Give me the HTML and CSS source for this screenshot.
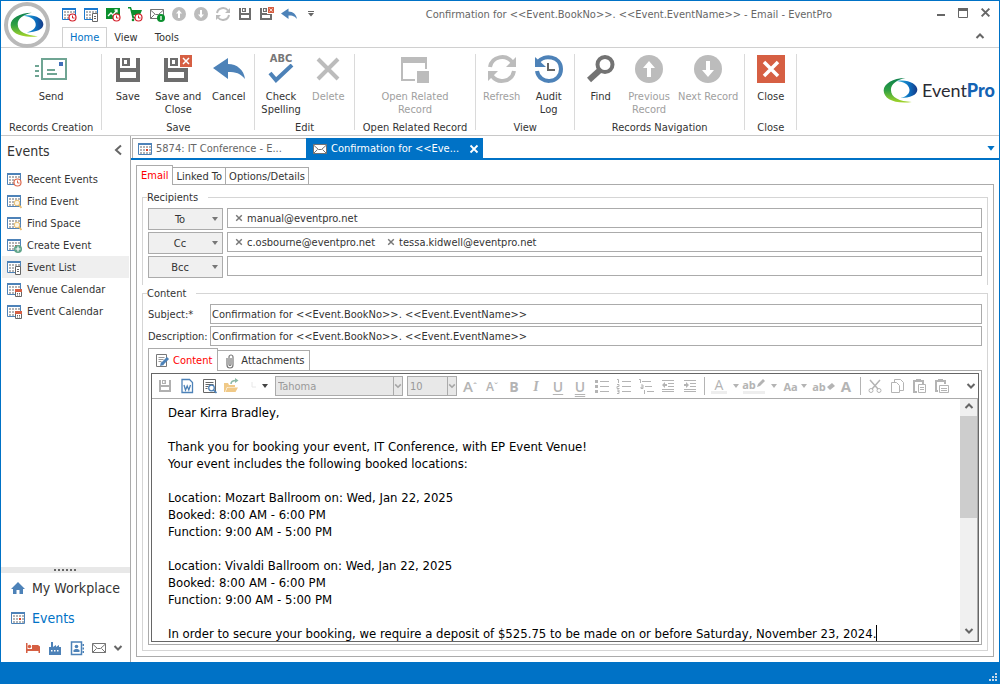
FILE: index.html
```
<!DOCTYPE html>
<html lang="en">
<head>
    <meta charset="utf-8">
    <title>Confirmation - Email - EventPro</title>
    <link rel="stylesheet" href="styles.css">
</head>
<body>
    <!-- shared icons -->
    <svg class="defs" width="0" height="0">
        <defs>
            <linearGradient id="green" x1="0" y1="0" x2="0" y2="1">
                <stop offset="0" stop-color="#0c7f4c"/><stop offset="0.5" stop-color="#2fa043"/><stop offset="1" stop-color="#a5d52a"/>
            </linearGradient>
            <linearGradient id="blue" x1="0" y1="0" x2="1" y2="0">
                <stop offset="0" stop-color="#2fb4d8"/><stop offset="0.6" stop-color="#0b6fc0"/><stop offset="1" stop-color="#173a86"/>
            </linearGradient>
        </defs>
        <symbol id="swoosh" viewBox="670 230 106 80">
            <path fill="url(#green)" d="M738 232C700 232 672 250 672 270C672 295 705 312 757 305C720 303 694 292 694 268C694 250 712 238 738 232Z"/>
            <path fill="url(#blue)" d="M712 241C745 235 774 250 774 268C774 284 752 293 722 293C742 288 752 278 750 266C748 252 735 244 712 241Z"/>
        </symbol>
        <symbol id="cal" viewBox="0 0 16 16">
            <path fill="#fff" stroke="currentColor" d="M1.500 2.500h13v11h-13z"/>
            <path fill="currentColor" d="M1 2h14v2H1z"/>
            <path stroke="#b4b4b4" stroke-width="2" stroke-dasharray="2 1" d="M3 6h11M3 9h11M3 12h11"/>
            <path fill="#e0442a" d="M9 8h2v2H9z"/>
        </symbol>
        <symbol id="clock" viewBox="0 0 16 16">
            <circle cx="11.500" cy="11.500" r="3.500" fill="#fff" stroke="currentColor" stroke-width="1.200"/>
            <path fill="none" stroke="currentColor" d="M11.500 9.500v2.500h2"/>
        </symbol>
        <symbol id="page" viewBox="0 0 16 16">
            <path fill="#fff" stroke="#666" d="M9.500 7.500h5v8h-5z"/><path stroke="#666" d="M11 10.500h2M11 12.500h2"/>
        </symbol>
        <symbol id="minical" viewBox="0 0 16 16">
            <path fill="#fff" stroke="#666" d="M9.500 9.500h6v6h-6z"/><path fill="#d65f43" d="M9 8h7v3H9z"/><path stroke="#666" stroke-dasharray="1 1" d="M11 12.500h3M11 14h3"/>
        </symbol>
        <symbol id="glass" viewBox="0 0 16 16">
            <circle cx="11" cy="10" r="2.800" fill="#fbf4e3" stroke="#e9bd6d"/><path stroke="#e9bd6d" stroke-width="1.800" d="M13 12l2.500 3"/>
        </symbol>
        <symbol id="plus" viewBox="0 0 16 16">
            <circle cx="12" cy="12" r="4" fill="#5fa48a"/><path stroke="#fff" stroke-width="1.200" d="M12 9.500v5M9.500 12h5"/>
        </symbol>
        <symbol id="mail" viewBox="0 0 16 16">
            <path fill="#fff" stroke="#737373" d="M1.500 3.500h13v9h-13z"/>
            <path fill="none" stroke="#737373" d="M1.500 4l5 4.500h3L14.500 4M1.500 12.500l4-4M14.500 12.500l-4-4"/>
        </symbol>
        <symbol id="disk" viewBox="0 0 24 24">
            <path fill="currentColor" fill-rule="evenodd" d="M0 0h4v10h16V0h4v24H0zM4 14v6h16v-6z"/>
            <path fill="currentColor" fill-rule="evenodd" d="M6 0h8v8H6zM8 2v4h3V2z"/>
        </symbol>
        <symbol id="redx" viewBox="0 0 28 28">
            <path fill="#d65f43" d="M0 0h28v28H0z"/><path stroke="#fff" stroke-width="3.500" d="M7 7l14 14M21 7L7 21"/>
        </symbol>
        <symbol id="undo" viewBox="0 0 32 22">
            <path fill="#4d82b8" d="M0 10L15 0v6c9 0 16 6 17 15c-5-6-9-7-17-7v7z"/>
        </symbol>
        <symbol id="up" viewBox="0 0 28 28">
            <circle cx="14" cy="14" r="14" fill="#bcbcbc"/><path fill="#fff" d="M14 6l6 7h-4v9h-4v-9H8z"/>
        </symbol>
        <symbol id="down" viewBox="0 0 28 28">
            <circle cx="14" cy="14" r="14" fill="#bcbcbc"/><path fill="#fff" d="M14 22l6-7h-4V6h-4v9H8z"/>
        </symbol>
        <symbol id="refresh" viewBox="0 0 28 28">
            <path fill="none" stroke="#bcbcbc" stroke-width="4" d="M2 12C4 1 18-1 24 7M26 16C24 27 10 29 4 21"/>
            <path fill="#bcbcbc" d="M28 2v10H18zM0 26V16h10z"/>
        </symbol>
        <symbol id="chev" viewBox="0 0 10 10"><path fill="none" stroke="currentColor" stroke-width="2" d="M1.500 3L5 6.500 8.500 3"/></symbol>
        <symbol id="tri" viewBox="0 0 8 5"><path fill="currentColor" d="M1 0h6L4 4z"/></symbol>
        <symbol id="x" viewBox="0 0 10 10"><path stroke="currentColor" stroke-width="1.800" d="M1.500 1.500l7 7M8.500 1.500l-7 7"/></symbol>
    </svg>

    <div class="window">
        <header class="top">
            <button class="app-btn" aria-label="Application menu"><svg width="34" height="28"><use href="#swoosh"/></svg></button>
            <div class="top-main">
                <div class="title-bar">
                    <div class="quick">
                        <button aria-label="Recent events"><svg class="bright"><use href="#cal"/><use href="#clock" class="red"/></svg></button>
                        <button aria-label="Event list"><svg class="bright"><use href="#cal"/><use href="#page"/></svg></button>
                        <button aria-label="Dashboard"><svg viewBox="0 0 16 16"><path fill="#0a8f2d" d="M1 2h14v11H1z"/><path fill="none" stroke="#fff" stroke-width="1.300" d="M3 10l3-3 2 2 4-5M9.500 4H12v2.500"/><use href="#clock" class="red"/></svg></button>
                        <button aria-label="Sales"><svg viewBox="0 0 16 16"><path fill="#0a8f2d" d="M1 1h3l1 3h10l-2 5H6.500l.5 2h5v1.500H5.500L3 2.500H1z"/><circle cx="6" cy="14" r="1.300" fill="#0a8f2d"/><use href="#clock" class="red"/></svg></button>
                        <button aria-label="Email"><svg viewBox="0 0 16 16"><use href="#mail"/><circle cx="12" cy="12" r="4" fill="#0a8f2d"/><path stroke="#fff" stroke-width="1.300" d="M12 10v4"/></svg></button>
                        <button aria-label="Previous"><svg class="s14"><use href="#up"/></svg></button>
                        <button aria-label="Next"><svg class="s14"><use href="#down"/></svg></button>
                        <button aria-label="Refresh"><svg class="s14"><use href="#refresh"/></svg></button>
                        <button aria-label="Save"><svg class="s12 dark"><use href="#disk"/></svg></button>
                        <button aria-label="Save and close"><svg viewBox="0 0 16 16" class="dark"><use href="#disk" x="1" y="2" width="12" height="12"/><path fill="#fff" d="M8 0h8v8H8z"/><use href="#redx" x="9" y="1" width="6" height="6"/></svg></button>
                        <button aria-label="Undo"><svg><use href="#undo"/></svg></button>
                        <button class="more" aria-label="Customize"><svg width="8" height="8" viewBox="0 0 8 8"><path stroke="#666" d="M1 1.500h6"/><path fill="#666" d="M1 3h6L4 6.500z"/></svg></button>
                    </div>
                    <h1>Confirmation for &lt;&lt;Event.BookNo&gt;&gt;. &lt;&lt;Event.EventName&gt;&gt; - Email - EventPro</h1>
                    <div class="win-btns">
                        <button aria-label="Minimize"><svg width="10" height="10"><path stroke="currentColor" stroke-width="2" d="M1 7h8"/></svg></button>
                        <button aria-label="Maximize"><svg width="10" height="10"><path fill="none" stroke="currentColor" d="M.5 1h9v8.500h-9z"/><path fill="currentColor" d="M0 0h10v3H0z"/></svg></button>
                        <button aria-label="Close window"><svg width="11" height="11"><use href="#x"/></svg></button>
                    </div>
                </div>
                <nav class="ribbon-tabs">
                    <button class="active">Home</button>
                    <button>View</button>
                    <button>Tools</button>
                    <button class="collapse" aria-label="Collapse ribbon"><svg class="flip" width="10" height="10"><use href="#chev"/></svg></button>
                </nav>
            </div>
        </header>

        <section class="ribbon">
            <div class="group">
                <div class="btns">
                    <button><svg width="32" height="28" viewBox="0 0 32 28"><path fill="none" stroke="#6fa593" stroke-width="2" d="M7 4h24v20H7zM0 11h4M0 16h4M0 21h4M12 15h8M12 19h10"/><path fill="#3f6fb8" d="M24 7h4v4h-4z"/></svg>Send</button>
                </div>
                <p>Records Creation</p>
            </div>
            <div class="group">
                <div class="btns">
                    <button><svg width="24" height="28" viewBox="0 0 24 28" class="dark"><use href="#disk" y="3" width="24" height="24"/></svg>Save</button>
                    <button><svg width="28" height="28" viewBox="0 0 28 28" class="dark"><use href="#disk" y="3" width="24" height="24"/><path fill="#fff" d="M15 0h13v13H15z"/><use href="#redx" x="16" width="12" height="12"/></svg>Save and<br>Close</button>
                    <button><svg width="32" height="22"><use href="#undo"/></svg>Cancel</button>
                </div>
                <p>Save</p>
            </div>
            <div class="group">
                <div class="btns">
                    <button><span class="abc"><b>ABC</b><svg width="26" height="20" viewBox="0 0 26 20"><path fill="none" stroke="#4d82b8" stroke-width="4" d="M2 9l6 7L24 1"/></svg></span>Check<br>Spelling</button>
                    <button disabled><svg width="26" height="26" viewBox="0 0 26 26"><path stroke="#bcbcbc" stroke-width="4" d="M3 3l20 20M23 3L3 23"/></svg>Delete</button>
                </div>
                <p>Edit</p>
            </div>
            <div class="group">
                <div class="btns">
                    <button disabled><svg width="28" height="28" viewBox="0 0 28 28"><path fill="#bcbcbc" d="M0 2h26v6H0zM0 8h2v16h12v2H0zM24 8h2v6h-2zM16 16h12v12H16z"/></svg>Open Related<br>Record</button>
                </div>
                <p>Open Related Record</p>
            </div>
            <div class="group">
                <div class="btns">
                    <button disabled><svg width="28" height="28"><use href="#refresh"/></svg>Refresh</button>
                    <button><svg width="28" height="28" viewBox="0 0 28 28"><path fill="none" stroke="#4d82b8" stroke-width="4" d="M3 7C9-1 26 1 26 14C26 29 4 30 2 16"/><path fill="#4d82b8" d="M0 2v10h11z"/><path fill="none" stroke="#666" stroke-width="2" d="M13 8v7h7"/></svg>Audit<br>Log</button>
                </div>
                <p>View</p>
            </div>
            <div class="group">
                <div class="btns">
                    <button><svg width="28" height="28" viewBox="0 0 28 28"><circle cx="18" cy="9.500" r="7.500" fill="none" stroke="#737373" stroke-width="4"/><path stroke="#737373" stroke-width="6" d="M13 15L2 25"/></svg>Find</button>
                    <button disabled><svg width="28" height="28"><use href="#up"/></svg>Previous<br>Record</button>
                    <button disabled><svg width="28" height="28"><use href="#down"/></svg>Next Record</button>
                </div>
                <p>Records Navigation</p>
            </div>
            <div class="group">
                <div class="btns">
                    <button><svg width="28" height="28"><use href="#redx"/></svg>Close</button>
                </div>
                <p>Close</p>
            </div>
            <div class="brand"><svg width="35" height="27"><use href="#swoosh"/></svg><span>Event<b>Pro</b></span></div>
        </section>

        <div class="body">
            <aside class="side">
                <div class="side-head"><h2>Events</h2><button aria-label="Collapse"><svg width="8" height="12"><path fill="none" stroke="currentColor" stroke-width="2" d="M7 1.500L2 6l5 4.500"/></svg></button></div>
                <ul class="side-list">
                    <li><a href="#"><svg><use href="#cal"/><use href="#clock" class="orange"/></svg>Recent Events</a></li>
                    <li><a href="#"><svg><use href="#cal"/><use href="#glass"/></svg>Find Event</a></li>
                    <li><a href="#"><svg><use href="#cal"/><use href="#glass"/></svg>Find Space</a></li>
                    <li><a href="#"><svg><use href="#cal"/><use href="#plus"/></svg>Create Event</a></li>
                    <li><a href="#" class="current"><svg><use href="#cal"/><use href="#page"/></svg>Event List</a></li>
                    <li><a href="#"><svg><use href="#cal"/><use href="#minical"/></svg>Venue Calendar</a></li>
                    <li><a href="#"><svg><use href="#cal"/><use href="#minical"/></svg>Event Calendar</a></li>
                </ul>
                <div class="splitter"><svg width="23" height="2"><path stroke="#666" stroke-width="2" stroke-dasharray="2 2" d="M0 1h23"/></svg></div>
                <nav class="side-nav">
                    <a href="#"><svg viewBox="0 0 16 16"><path fill="#4d82b8" d="M8 2l7 7h-2v5H9.500v-4h-3v4H3V9H1z"/></svg>My Workplace</a>
                    <a href="#" class="on"><svg><use href="#cal"/></svg>Events</a>
                </nav>
                <div class="side-icons">
                    <button aria-label="Rooms"><svg viewBox="0 0 16 16"><path fill="#d65f43" d="M1 3h1.500v6H15v4h-1.500v-2h-11v2H1zM7 5h6l2 1.500V10H7z"/><circle cx="4.500" cy="6.500" r="1.700" fill="#d65f43"/></svg></button>
                    <button aria-label="Venues"><svg viewBox="0 0 16 16"><path fill="#4d82b8" fill-rule="evenodd" d="M2 7h2V2h2v5l3-2v2l3-2v2h2v8H2zM4 10v1.500h1.500V10zM7 10v1.500h1.500V10zM10 10v1.500h1.500V10z"/></svg></button>
                    <button aria-label="Contacts"><svg viewBox="0 0 16 16"><path fill="none" stroke="#4d82b8" stroke-width="1.500" d="M2.500 2h10v12.500h-10z"/><circle cx="7.500" cy="6.500" r="1.800" fill="#4d82b8"/><path fill="#4d82b8" d="M4.500 12V10l2-1h2l2 1v2zM13.500 4h1.500v2h-1.500zM13.500 7.500h1.500v2h-1.500zM13.500 11h1.500v2h-1.500z"/></svg></button>
                    <button aria-label="Email"><svg><use href="#mail"/></svg></button>
                    <button aria-label="More"><svg class="s10"><use href="#chev"/></svg></button>
                </div>
            </aside>

            <main>
                <div class="doc-tabs">
                    <button class="doc"><svg><use href="#cal"/></svg>5874: IT Conference - E...</button>
                    <button class="doc active"><svg><use href="#mail"/></svg>Confirmation for &lt;&lt;Eve...<svg class="s10 doc-x"><use href="#x"/></svg></button>
                    <button class="doc-more" aria-label="Open tabs"><svg width="10" height="6"><use href="#tri"/></svg></button>
                </div>
                <div class="form">
                    <div class="tabs">
                        <button class="active">Email</button>
                        <button>Linked To</button>
                        <button>Options/Details</button>
                    </div>
                    <div class="panel">
                        <fieldset>
                            <legend>Recipients</legend>
                            <div class="row">
                                <button class="pick" id="to"><span>To</span><svg width="8" height="5"><use href="#tri"/></svg></button>
                                <div class="tokens"><span><svg><use href="#x"/></svg>manual@eventpro.net</span><input type="text" aria-labelledby="to"></div>
                            </div>
                            <div class="row">
                                <button class="pick" id="cc"><span>Cc</span><svg width="8" height="5"><use href="#tri"/></svg></button>
                                <div class="tokens"><span><svg><use href="#x"/></svg>c.osbourne@eventpro.net</span><span><svg><use href="#x"/></svg>tessa.kidwell@eventpro.net</span><input type="text" aria-labelledby="cc"></div>
                            </div>
                            <div class="row">
                                <button class="pick" id="bcc"><span>Bcc</span><svg width="8" height="5"><use href="#tri"/></svg></button>
                                <div class="tokens"><input type="text" aria-labelledby="bcc"></div>
                            </div>
                        </fieldset>
                        <fieldset class="content">
                            <legend>Content</legend>
                            <div class="field"><label for="subject">Subject:*</label><input id="subject" type="text" value="Confirmation for &lt;&lt;Event.BookNo&gt;&gt;. &lt;&lt;Event.EventName&gt;&gt;"></div>
                            <div class="field"><label for="desc">Description:</label><input id="desc" type="text" value="Confirmation for &lt;&lt;Event.BookNo&gt;&gt;. &lt;&lt;Event.EventName&gt;&gt;"></div>
                            <div class="tabs inner">
                                <button class="active"><svg viewBox="0 0 16 16"><path fill="#fff" stroke="#777" d="M2.500 2.500h10v12h-10z"/><path stroke="#999" d="M4.500 5.500h6M4.500 7.500h5M4.500 9.500h3"/><path stroke="#4d82b8" stroke-width="3" d="M14 6l-6 6"/><path fill="#4d82b8" d="M6 14l1-4 3 3z"/></svg>Content</button>
                                <button><svg viewBox="0 0 16 16"><path fill="none" stroke="#777" stroke-width="1.200" d="M5 5v7a3 3 0 0 0 6 0V4a2 2 0 0 0-4 0v7.500a1 1 0 0 0 2 0V5"/></svg>Attachments</button>
                            </div>
                            <div class="panel inner-panel">
                                <div class="editor">
                                    <div class="tools">
                                        <button aria-label="Save"><svg class="s12"><use href="#disk"/></svg></button>
                                        <button aria-label="Word"><svg viewBox="0 0 16 16"><path fill="#fff" stroke="#4d82b8" stroke-width="1.300" d="M3 1.500h7.500l3 3v10H3z"/><path fill="none" stroke="#4d82b8" stroke-width="1.300" d="M5 7l1.500 5L8.200 8l1.600 4L11.500 7"/></svg></button>
                                        <button aria-label="Preview"><svg viewBox="0 0 16 16"><path fill="none" stroke="#666" d="M2.500 1.500h12v13h-12zM4.500 4.500h8M4.500 6.500h8M4.500 8.500h3M4.500 10.500h2"/><circle cx="10.500" cy="10" r="2.800" fill="#fff" stroke="#4d82b8" stroke-width="1.300"/><path stroke="#4d82b8" stroke-width="1.700" d="M12.500 12l3 3"/></svg></button>
                                        <button aria-label="Open"><svg viewBox="0 0 16 16"><path fill="#f0c987" d="M1 5h4l1 2h6v2H4l-2 5H1zM4.500 9.500H15L12.500 14H2.500z"/><path fill="none" stroke="#8bb8a5" stroke-width="1.500" d="M8 6c0-3 2-3.500 5-3.500"/><path fill="#8bb8a5" d="M12 0l3.500 2.500L12 5z"/></svg></button>
                                        <button aria-label="Undo history" class="undo"><svg viewBox="0 0 16 16"><path stroke="#e8e8e8" d="M7 4v5h4" fill="none"/></svg><svg class="tri ink"><use href="#tri"/></svg></button>
                                        <span class="combo font"><select aria-label="Font" disabled><option>Tahoma</option></select><svg class="s10"><use href="#chev"/></svg></span>
                                        <span class="combo size"><select aria-label="Font size" disabled><option>10</option></select><svg class="s10"><use href="#chev"/></svg></span>
                                        <button disabled class="grow">A<sup>ˆ</sup></button>
                                        <button disabled class="small">A<sup>ˇ</sup></button>
                                        <button disabled><b>B</b></button>
                                        <button disabled class="it">I</button>
                                        <button disabled class="u">U</button>
                                        <button disabled class="u dbl">U</button>
                                        <button disabled aria-label="Bullets"><svg viewBox="0 0 16 16"><path stroke="currentColor" d="M6 3.500h9M6 8.500h9M6 13.500h9"/><path stroke="currentColor" stroke-width="3" d="M1 3.500h3M1 8.500h3M1 13.500h3"/></svg></button>
                                        <button disabled aria-label="Numbering"><svg viewBox="0 0 16 16"><path fill="none" stroke="currentColor" d="M6 3.500h9M6 8.500h9M6 13.500h9M1 1.500h1.500V5M1 6.500h2v2H1v2h2.500M1 12h2v3.500H1M1.500 13.500H3"/></svg></button>
                                        <button disabled aria-label="Multilevel list"><svg viewBox="0 0 16 16"><path fill="none" stroke="currentColor" d="M4 3.500h9M7 8.500h7M9 13.500h7M1 1.500h1.500V5M3 7h2v3.500H3V9h2M6.500 12v4"/></svg></button>
                                        <button disabled aria-label="Decrease indent"><svg viewBox="0 0 16 16"><path stroke="currentColor" d="M2 2.500h12M8 5.500h6M8 8.500h6M2 11.500h12M2 13.500h12"/><path fill="currentColor" d="M2 7l3-3v2h2v2H5v2z"/></svg></button>
                                        <button disabled aria-label="Increase indent"><svg viewBox="0 0 16 16"><path stroke="currentColor" d="M2 2.500h12M8 5.500h6M8 8.500h6M2 11.500h12M2 13.500h12"/><path fill="currentColor" d="M7 7L4 4v2H2v2h2v2z"/></svg></button>
                                        <i class="sep"></i>
                                        <button disabled class="drop"><span class="bar">A</span><svg class="tri"><use href="#tri"/></svg></button>
                                        <button disabled class="drop"><span class="bar ab">ab<svg class="s10"><path fill="currentColor" d="M1 9l1-3 5-5 2 2-5 5z"/></svg></span><svg class="tri"><use href="#tri"/></svg></button>
                                        <button disabled class="drop aa">Aa<svg class="tri"><use href="#tri"/></svg></button>
                                        <button disabled class="ab">ab<svg class="s10"><path fill="currentColor" d="M1 6l5-4 3 3-5 4z"/></svg></button>
                                        <button disabled class="big">A</button>
                                        <i class="sep"></i>
                                        <button disabled aria-label="Cut"><svg viewBox="0 0 16 16"><circle cx="4" cy="12.500" r="2" fill="none" stroke="currentColor"/><circle cx="12" cy="12.500" r="2" fill="none" stroke="currentColor"/><path stroke="currentColor" stroke-width="1.500" d="M3 2l8 9M13 2l-8 9"/></svg></button>
                                        <button disabled aria-label="Copy"><svg viewBox="0 0 16 16"><path fill="#fff" stroke="currentColor" d="M5.500 1.500h6l3 3v8h-9z"/><path fill="#fff" stroke="currentColor" d="M2.500 4.500h5l3 3v7h-8z"/></svg></button>
                                        <button disabled aria-label="Paste"><svg viewBox="0 0 16 16"><path fill="none" stroke="currentColor" stroke-width="2" d="M6 14H3V3h9v3M5 2h5"/><path fill="#fff" stroke="currentColor" d="M7.500 6.500h7v8h-7zM9 9.500h4M9 11.500h4"/></svg></button>
                                        <button disabled aria-label="Paste special"><svg viewBox="0 0 16 16"><path fill="none" stroke="currentColor" stroke-width="2" d="M5 13H3V3h9v3M5 2h5"/><path fill="#fff" stroke="currentColor" d="M6.500 7.500h9v7h-9zM8 10.500h6M8 12.500h6"/></svg></button>
                                        <button class="end" aria-label="More tools"><svg class="s10"><use href="#chev"/></svg></button>
                                    </div>
                                    <div class="edit-area">
                                        <div class="text" contenteditable="true" role="textbox" aria-multiline="true" aria-label="Message" spellcheck="false">
                                            <p>Dear Kirra Bradley,</p>
                                            <p><br></p>
                                            <p>Thank you for booking your event, IT Conference, with EP Event Venue!</p>
                                            <p>Your event includes the following booked locations:</p>
                                            <p><br></p>
                                            <p>Location: Mozart Ballroom on: Wed, Jan 22, 2025</p>
                                            <p>Booked: 8:00 AM - 6:00 PM</p>
                                            <p>Function: 9:00 AM - 5:00 PM</p>
                                            <p><br></p>
                                            <p>Location: Vivaldi Ballroom on: Wed, Jan 22, 2025</p>
                                            <p>Booked: 8:00 AM - 6:00 PM</p>
                                            <p>Function: 9:00 AM - 5:00 PM</p>
                                            <p><br></p>
                                            <p class="last">In order to secure your booking, we require a deposit of $525.75 to be made on or before Saturday, November 23, 2024.</p>
                                        </div>
                                        <div class="scroll">
                                            <button aria-label="Scroll up"><svg class="s10 flip"><use href="#chev"/></svg></button>
                                            <div class="track"><div class="thumb"></div></div>
                                            <button aria-label="Scroll down"><svg class="s10"><use href="#chev"/></svg></button>
                                        </div>
                                    </div>
                                </div>
                            </div>
                        </fieldset>
                    </div>
                </div>
            </main>
        </div>
        <footer><svg width="8" height="8"><path fill="#c8d8e8" d="M6 0h2v2H6zM3 3h2v2H3zM6 3h2v2H6zM0 6h2v2H0zM3 6h2v2H3zM6 6h2v2H6z"/></svg></footer>
    </div>
</body>
</html>
```

FILE: styles.css
```
* {
    box-sizing: border-box;
}
body {
    margin: 0;
    font-family: "DejaVu Sans Condensed", "DejaVu Sans", sans-serif;
    font-size: 11px;
    line-height: 13px;
    color: #333;
}
.defs {
    position: absolute;
}
button, input, select {
    font: inherit;
    color: inherit;
}
button {
    background: none;
    border: none;
    padding: 0;
    white-space: nowrap;
}
svg {
    width: 16px;
    height: 16px;
    flex: none;
    color: #4d82b8;
}
svg[width] {
    width: auto;
    height: auto;
    color: inherit;
}
h1, h2, p, ul {
    margin: 0;
    padding: 0;
    font-weight: normal;
    list-style: none;
}
a {
    color: inherit;
    text-decoration: none;
}
.s10 { width: 10px; height: 10px; color: #666; }
.s12 { width: 12px; height: 12px; color: #b0b0b0; }
.s14 { width: 14px; height: 14px; }
.flip { transform: rotate(180deg); }
.bright { color: #1a78cf; }
.red { color: #d4202a; }
.orange { color: #dd6a50; }
svg.dark, svg[width].dark { color: #6d6d6d; }

.window {
    height: 100vh;
    display: flex;
    flex-direction: column;
    border: 1px solid #0072c6;
    border-bottom: none;
    background: #fff;
}

/* title bar and ribbon tabs */
.top {
    display: flex;
    height: 47px;
    border-bottom: 1px solid #d0d0d0;
}
.app-btn {
    width: 46px;
    height: 46px;
    margin: 1px 8px 0 3px;
    border: 4px solid #b9b9b9;
    border-radius: 50%;
    background: #fff;
    display: flex;
    align-items: center;
    justify-content: center;
}
.top-main {
    flex: 1;
    display: flex;
    flex-direction: column;
}
.title-bar {
    height: 27px;
    display: flex;
    align-items: center;
}
.quick {
    display: flex;
}
.quick button {
    width: 22px;
    height: 22px;
    display: flex;
    align-items: center;
    justify-content: center;
}
.title-bar h1 {
    flex: 1;
    font-size: 11px;
    text-align: center;
    color: #666;
}
.win-btns {
    display: flex;
    gap: 12px;
    padding-right: 8px;
    color: #666;
}
.ribbon-tabs {
    display: flex;
    height: 20px;
    padding-left: 4px;
}
.ribbon-tabs button {
    padding: 0 7px;
    margin-right: 3px;
}
.ribbon-tabs .active {
    background: #fff;
    border: 1px solid #d0d0d0;
    border-bottom: none;
    color: #0072c6;
    margin-right: 0;
}
.ribbon-tabs .collapse {
    margin-left: auto;
    padding-right: 11px;
    color: #666;
}

/* ribbon */
.ribbon {
    display: flex;
    height: 88px;
    border-bottom: 1px solid #c8c8c8;
    padding: 6px 0 5px;
}
.group {
    border-right: 1px solid #dadada;
    display: flex;
    flex-direction: column;
    justify-content: space-between;
    text-align: center;
    padding: 0 2px;
}
.group p {
    padding: 0 6px;
    line-height: 5px;
}
.btns {
    display: flex;
    justify-content: center;
}
.btns button {
    min-width: 47px;
    padding: 0 4px;
    display: grid;
    grid-template-rows: 30px auto;
    row-gap: 6px;
    justify-items: center;
    align-items: center;
    align-content: start;
}
.btns button[disabled] {
    color: #a0a0a0;
}
.abc {
    display: flex;
    flex-direction: column;
    align-items: center;
    font-size: 11px;
    line-height: 10px;
    color: #777;
}
.brand {
    margin-left: auto;
    display: flex;
    align-items: center;
    gap: 4px;
    padding: 0 4px 4px 0;
    font: 18px/24px Lato, sans-serif;
    color: #2b2b33;
}
.brand b {
    font-weight: 900;
    color: #1463b4;
}

.body {
    flex: 1;
    min-height: 0;
    display: flex;
}

/* left navigation */
.side {
    width: 130px;
    border-right: 1px solid #ababab;
    display: flex;
    flex-direction: column;
}
.side-head {
    display: flex;
    justify-content: space-between;
    align-items: center;
    height: 30px;
    margin-bottom: 2px;
    padding: 0 8px 0 6px;
    color: #666;
}
.side-head h2 {
    font-size: 14px;
    color: #333;
}
.side-list a {
    display: flex;
    align-items: center;
    gap: 5px;
    height: 22px;
    padding-left: 4px;
    margin: 0 1px;
}
.side-list .current {
    background: #efefef;
}
.splitter {
    height: 6px;
    margin-top: auto;
    background: #e8e8e8;
    display: flex;
    align-items: center;
    justify-content: center;
}
.side-nav a {
    display: flex;
    align-items: center;
    gap: 6px;
    height: 30px;
    padding-left: 9px;
    font-size: 14px;
}
.side-nav .on {
    color: #0072c6;
}
.side-icons {
    display: flex;
    align-items: center;
    justify-content: flex-end;
    gap: 6px;
    height: 29px;
    padding-right: 7px;
}
.side-icons button, .tools button {
    display: flex;
    align-items: center;
}

/* document tabs */
main {
    flex: 1;
    min-width: 0;
    display: flex;
    flex-direction: column;
}
.doc-tabs {
    display: flex;
    height: 24px;
    padding: 2px 0 0 1px;
    border-bottom: 2px solid #0072c6;
}
.doc {
    display: flex;
    align-items: center;
    gap: 3px;
    width: 174px;
    padding: 0 4px;
    border: 1px solid #ababab;
    border-width: 1px 0 0 1px;
    color: #666;
}
.doc.active {
    width: 177px;
    padding-left: 5px;
    background: #0072c6;
    border-color: #0072c6;
    color: #fff;
}
.doc-x {
    margin-left: auto;
    color: #fff;
}
.doc-more {
    margin-left: auto;
    padding-right: 3px;
    color: #0072c6;
}

/* form */
.form {
    flex: 1;
    min-height: 0;
    display: flex;
    flex-direction: column;
    padding: 5px;
}
.tabs {
    display: flex;
    align-items: flex-end;
}
.tabs button {
    display: flex;
    align-items: center;
    gap: 3px;
    height: 17px;
    padding: 0 3px;
    border: 1px solid #ababab;
    border-width: 1px 1px 0 0;
}
.tabs .active {
    height: 20px;
    margin-bottom: -1px;
    padding: 0 4px;
    border-left-width: 1px;
    background: #fff;
    color: #ff0000;
    z-index: 1;
}
.panel {
    flex: 1;
    min-height: 0;
    display: flex;
    flex-direction: column;
    border: 1px solid #ababab;
    padding: 6px 5px 5px;
}
fieldset {
    margin: 0;
    min-width: 0;
    border: 1px solid #d5d5d5;
    border-bottom: none;
    padding: 4px 5px 5px;
}
legend {
    margin-left: -1px;
    padding: 0 10px 0 0;
}
fieldset .row {
    display: flex;
    align-items: flex-start;
    gap: 4px;
    margin-bottom: 2px;
}
.pick {
    display: flex;
    align-items: center;
    width: 75px;
    height: 22px;
    padding: 0 3px 0 0;
    border: 1px solid #ababab;
    background: #f0f0f0;
}
.pick span {
    flex: 1;
}
.pick svg {
    color: #777;
}
.tokens {
    flex: 1;
    display: flex;
    align-items: center;
    height: 20px;
    border: 1px solid #ababab;
    padding-left: 7px;
}
.tokens span {
    display: flex;
    align-items: center;
    gap: 4px;
    margin-right: 12px;
}
.tokens svg {
    width: 8px;
    height: 8px;
    color: #777;
}
.tokens input {
    flex: 1;
    min-width: 0;
    border: none;
    padding: 0;
}
.content {
    flex: 1;
    min-height: 0;
    display: flex;
    flex-direction: column;
    border-bottom: 1px solid #d5d5d5;
    margin-top: 2px;
}
.field {
    display: flex;
    align-items: center;
    margin-bottom: 2px;
}
.field label {
    width: 62px;
}
.field input {
    flex: 1;
    height: 20px;
    border: 1px solid #ababab;
    padding: 0 1px;
}
.inner button {
    height: 20px;
    padding: 0 4px;
}
.inner .active {
    height: 23px;
    padding: 0 5px;
}
.inner-panel {
    padding: 2px;
}
.editor {
    flex: 1;
    min-height: 0;
    display: flex;
    flex-direction: column;
    border: 1px solid #666;
}
.tools {
    display: flex;
    align-items: center;
    height: 25px;
    border-bottom: 1px solid #ababab;
    padding-left: 2px;
}
.tools button {
    width: 22px;
    height: 20px;
    justify-content: center;
}
.tools button[disabled], .tools button[disabled] svg {
    color: #b4b4b4;
}
.tools button {
    font-family: "Open Sans", sans-serif;
    font-size: 14px;
}
.tools .undo {
    width: 29px;
}
.tools .tri {
    width: 8px;
    height: 5px;
}
.tools .ink {
    color: #444;
}
.tools sup {
    font-size: 9px;
}
.tools .grow {
    font-size: 15px;
    font-weight: 600;
}
.tools .small {
    font-size: 12px;
    font-weight: 600;
}
.tools .it {
    font-family: "Liberation Serif", serif;
    font-style: italic;
    font-weight: bold;
}
.tools .u {
    text-decoration: underline;
    text-underline-offset: 2px;
    font-weight: 600;
}
.tools .dbl {
    text-decoration-style: double;
}
.combo {
    display: flex;
    align-items: center;
    height: 20px;
    margin-right: 4px;
    border: 1px solid #ababab;
    background: #e8e8e8;
    color: #999;
}
.combo.font {
    width: 128px;
    margin-left: 4px;
}
.combo.size {
    width: 50px;
    margin-right: 2px;
}
.combo select {
    flex: 1;
    min-width: 0;
    height: 18px;
    appearance: none;
    border: none;
    border-right: 1px solid #ababab;
    background: none;
    padding: 0 2px;
    opacity: 1;
}
.combo svg {
    width: 8px;
    color: #a6a6a6;
}
.sep {
    width: 1px;
    height: 18px;
    margin: 0 3px;
    background: #b4b4b4;
}
.tools .drop {
    width: 35px;
    gap: 5px;
}
.tools .aa, .tools .ab {
    font-size: 11px;
    font-weight: bold;
}
.tools .aa {
    gap: 2px;
}
.bar {
    display: flex;
    justify-content: center;
    min-width: 16px;
    border-bottom: 3px solid #eee;
}
.tools .big {
    font-weight: bold;
    font-size: 15px;
}
.tools .end {
    margin-left: auto;
    width: 14px;
}
.edit-area {
    flex: 1;
    min-height: 0;
    display: flex;
}
.text {
    flex: 1;
    overflow: hidden;
    white-space: nowrap;
    padding: 5px 16px 0;
    font-size: 13px;
    line-height: 17px;
    color: #000;
    outline: none;
}
.last {
    width: max-content;
    border-right: 1px solid #000;
}
.scroll {
    width: 18px;
    display: flex;
    flex-direction: column;
    background: #f0f0f0;
    border-right: 1px solid #ababab;
}
.scroll button {
    height: 17px;
}
.track {
    flex: 1;
}
.thumb {
    height: 49%;
    background: #cdcdcd;
}

footer {
    height: 22px;
    margin: 0 -1px;
    background: #0072c6;
    display: flex;
    justify-content: flex-end;
    align-items: flex-end;
    padding: 0 3px 3px;
}
```
